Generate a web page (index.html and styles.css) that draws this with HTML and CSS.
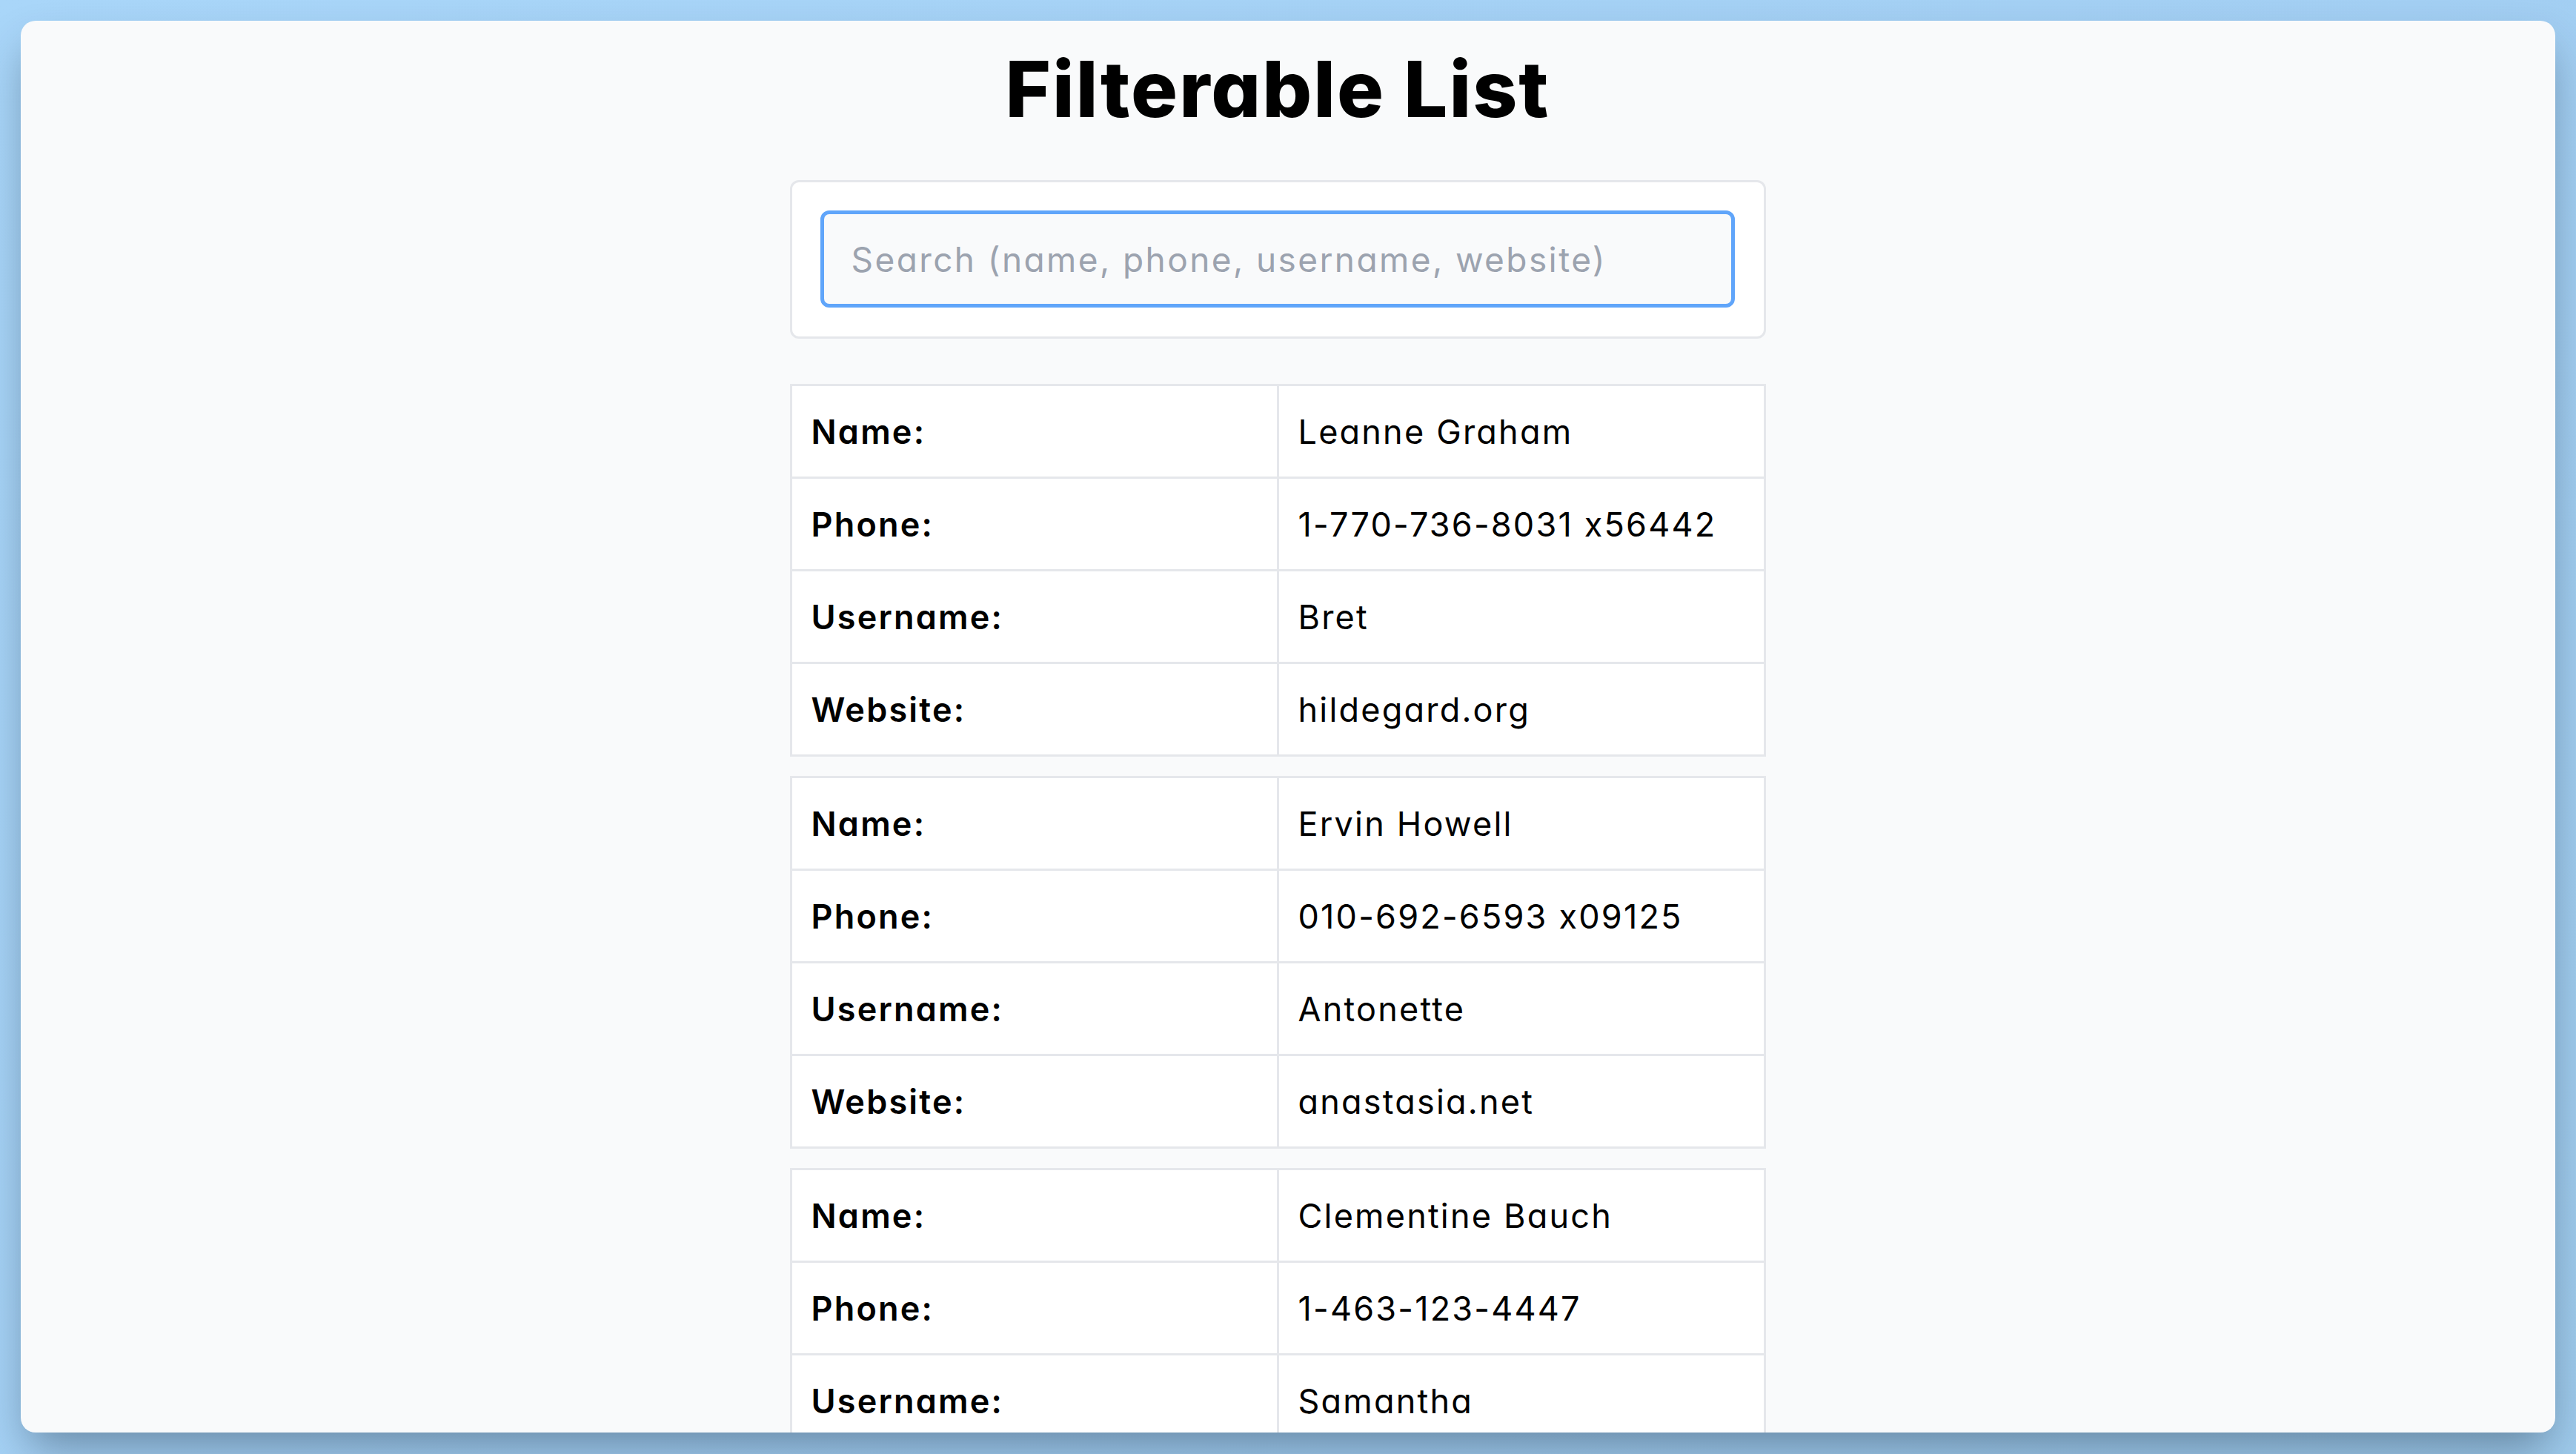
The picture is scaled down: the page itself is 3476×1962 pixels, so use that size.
FILE: index.html
```html
<!DOCTYPE html>
<html lang="en">
<head>
<meta charset="utf-8">
<title>Filterable List</title>
<link rel="stylesheet" href="styles.css">
</head>
<body>
<div class="window">
  <main class="content">
    <h1 class="title">Filterable List</h1>
    <div class="search-box">
      <input class="search-input" type="text" placeholder="Search (name, phone, username, website)" autofocus>
    </div>
    <table class="record">
      <tr><td class="label">Name:</td><td class="value">Leanne Graham</td></tr>
      <tr><td class="label">Phone:</td><td class="value">1-770-736-8031 x56442</td></tr>
      <tr><td class="label">Username:</td><td class="value">Bret</td></tr>
      <tr><td class="label">Website:</td><td class="value">hildegard.org</td></tr>
    </table>
    <table class="record">
      <tr><td class="label">Name:</td><td class="value">Ervin Howell</td></tr>
      <tr><td class="label">Phone:</td><td class="value">010-692-6593 x09125</td></tr>
      <tr><td class="label">Username:</td><td class="value">Antonette</td></tr>
      <tr><td class="label">Website:</td><td class="value">anastasia.net</td></tr>
    </table>
    <table class="record">
      <tr><td class="label">Name:</td><td class="value">Clementine Bauch</td></tr>
      <tr><td class="label">Phone:</td><td class="value">1-463-123-4447</td></tr>
      <tr><td class="label">Username:</td><td class="value">Samantha</td></tr>
      <tr><td class="label">Website:</td><td class="value">ramiro.info</td></tr>
    </table>
  </main>
</div>
</body>
</html>
```

FILE: styles.css
```css
html, body {
  margin: 0;
  padding: 0;
}
body {
  width: 3476px;
  height: 1962px;
  box-sizing: border-box;
  padding: 28px 28px 0 28px;
  overflow: hidden;
  background: linear-gradient(135deg, #a9d6f9 0%, #a3cff3 60%, #9fcbec 100%);
  font-family: Inter, "Noto Sans", sans-serif;
  font-feature-settings: "cv11";
  color: #000;
}
.window {
  height: 1905px;
  box-sizing: border-box;
  border-radius: 20px;
  background: #f9fafb;
  overflow: hidden;
  padding: 29px 28px 0 0;
  box-shadow: 0 30px 60px -10px rgba(30, 50, 70, 0.45);
}
.content {
  width: 1317px;
  margin: 0 auto;
}
.title {
  margin: 0;
  text-align: center;
  font-size: 105px;
  line-height: 125px;
  font-weight: 800;
  letter-spacing: 2px;
}
.search-box {
  margin-top: 61px;
  background: #ffffff;
  border: 3px solid #e5e7eb;
  border-radius: 12px;
  padding: 38px 39px 39px 38px;
}
.search-input {
  display: block;
  width: 100%;
  height: 131px;
  box-sizing: border-box;
  border: 5px solid #60a5fa;
  border-radius: 12px;
  background: #f9fafb;
  padding: 0 37px;
  font-family: Inter, "Noto Sans", sans-serif;
  font-feature-settings: "cv11";
  font-size: 46px;
  letter-spacing: 2.4px;
  color: #000;
  outline: none;
}
.search-input::placeholder {
  color: #9ca3af;
}
.record {
  width: 100%;
  table-layout: fixed;
  border-collapse: collapse;
  background: #ffffff;
  margin-top: 26px;
}
.record:first-of-type {
  margin-top: 61px;
}
.record td {
  width: 50%;
  border: 3px solid #e5e7eb;
  padding: 31px 26px 30px 26px;
  font-size: 45px;
  line-height: 61px;
  letter-spacing: 2.2px;
  white-space: nowrap;
}
.label {
  font-weight: 600;
}
.value {
  font-weight: 400;
}
```
